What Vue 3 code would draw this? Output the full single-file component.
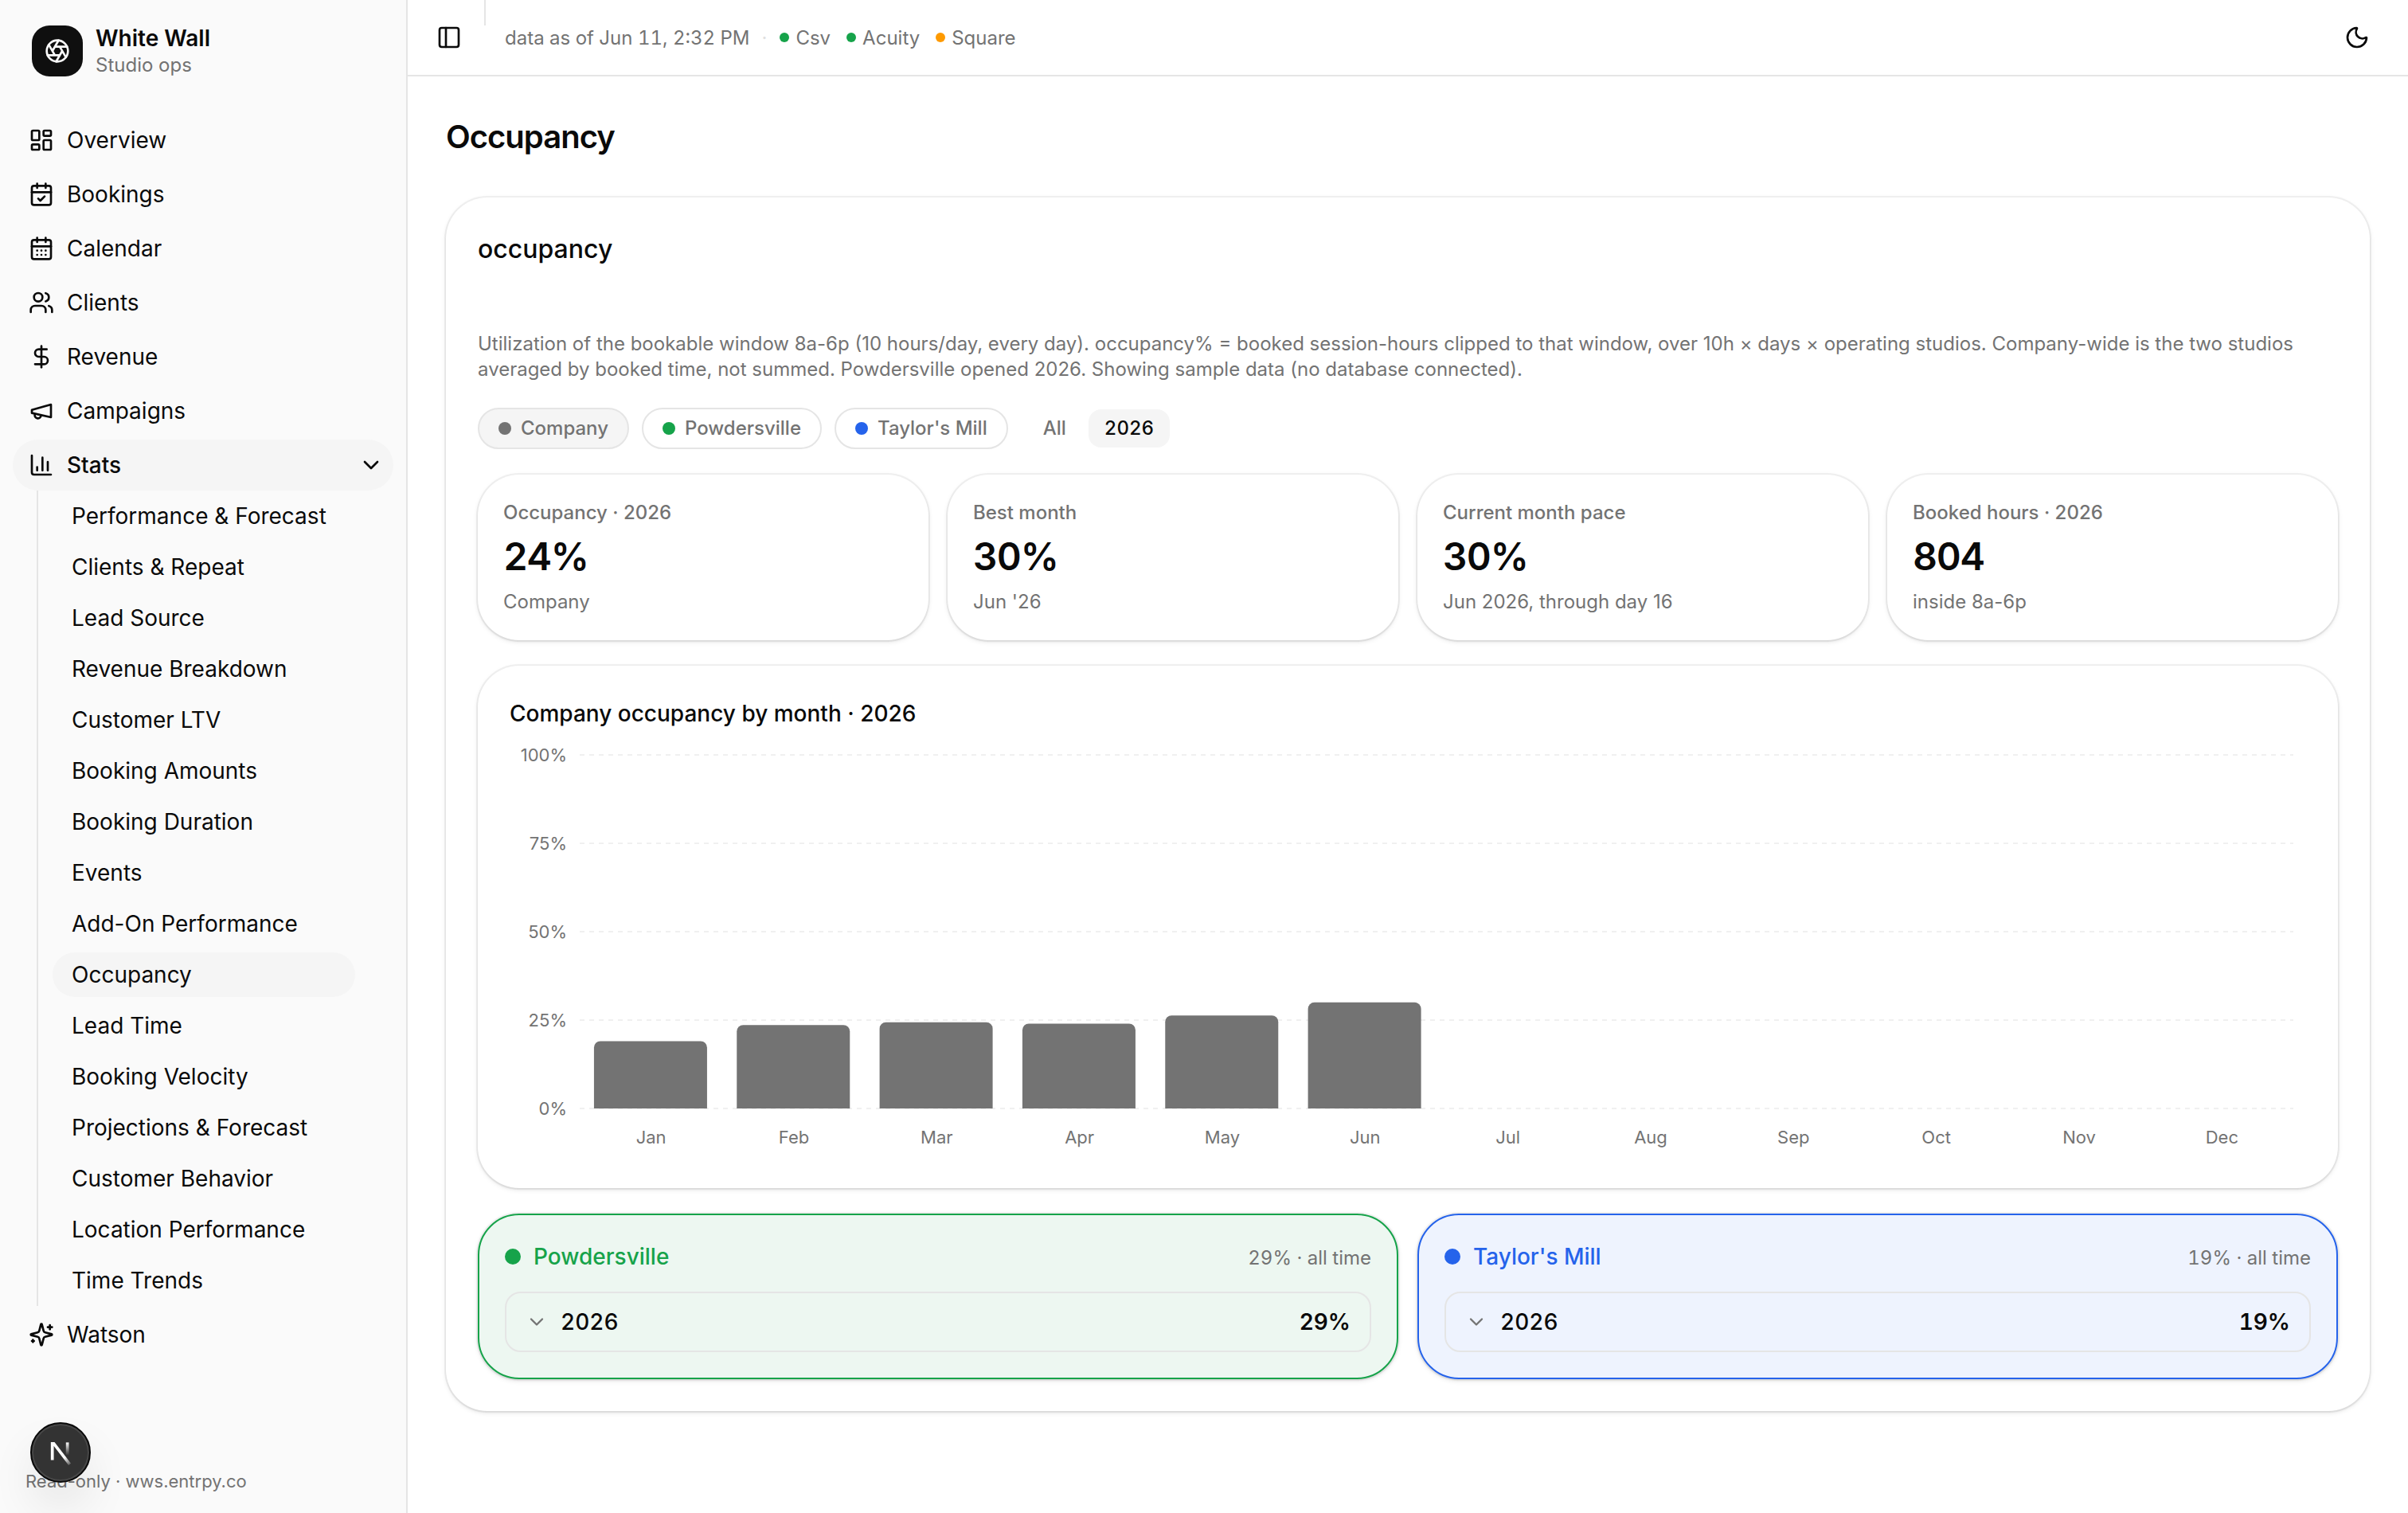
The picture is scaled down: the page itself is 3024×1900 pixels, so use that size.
<template>
  <div class="app">
    <aside class="sidebar">
      <div class="brand">
        <div class="brand-logo">
          <svg class="icon" viewBox="0 0 24 24">
            <circle cx="12" cy="12" r="10" />
            <path d="m14.31 8 5.74 9.94M9.69 8h11.48M7.38 12l5.74-9.94M9.69 16 3.95 6.06M14.31 16H2.83M16.62 12l-5.74 9.94" />
          </svg>
        </div>
        <div class="brand-text">
          <span class="brand-name">White Wall</span>
          <span class="brand-sub">Studio ops</span>
        </div>
      </div>

      <nav class="nav">
        <template v-for="item in navItems" :key="item.label">
          <a class="nav-item" :class="{ open: item.children }">
            <svg class="icon" viewBox="0 0 24 24"><path v-for="d in item.icon" :key="d" :d="d" /></svg>
            <span>{{ item.label }}</span>
            <svg v-if="item.children" class="icon chevron" viewBox="0 0 24 24"><path d="m6 9 6 6 6-6" /></svg>
          </a>
          <div v-if="item.children" class="subnav">
            <a
              v-for="child in item.children"
              :key="child"
              class="subnav-item"
              :class="{ active: child === activePage }"
            >{{ child }}</a>
          </div>
        </template>
      </nav>

      <div class="sidebar-footer">Read-only · wws.entrpy.co</div>
    </aside>

    <div class="main">
      <header class="topbar">
        <svg class="icon" viewBox="0 0 24 24"><rect x="3" y="3" width="18" height="18" rx="2" /><path d="M9 3v18" /></svg>
        <span class="divider"></span>
        <div class="sync">
          <span>data as of Jun 11, 2:32 PM</span>
          <span class="sep">·</span>
          <span v-for="s in sources" :key="s.name" class="source">
            <i class="dot" :class="s.tone"></i>{{ s.name }}
          </span>
        </div>
        <svg class="icon theme" viewBox="0 0 24 24"><path d="M20.985 12.486a9 9 0 1 1-9.473-9.472c.405-.022.617.46.402.803a6 6 0 0 0 8.268 8.268c.344-.215.825-.004.803.401" /></svg>
      </header>

      <main class="content">
        <h1>Occupancy</h1>

        <section class="card panel">
          <h2>occupancy</h2>
          <p class="desc">Utilization of the bookable window 8a-6p (10 hours/day, every day). occupancy% = booked session-hours clipped to that window, over 10h × days × operating studios. Company-wide is the two studios averaged by booked time, not summed. Powdersville opened 2026. Showing sample data (no database connected).</p>

          <div class="filters">
            <button
              v-for="s in scopes"
              :key="s.name"
              class="chip"
              :class="{ selected: s.name === scope }"
              @click="scope = s.name"
            ><i class="dot" :class="s.tone"></i><span>{{ s.name }}</span></button>
            <div class="years">
              <button
                v-for="y in years"
                :key="y"
                class="year"
                :class="{ selected: y === year }"
                @click="year = y"
              >{{ y }}</button>
            </div>
          </div>

          <div class="kpis">
            <div v-for="k in kpis" :key="k.label" class="card kpi">
              <span class="kpi-label">{{ k.label }}</span>
              <span class="kpi-value">{{ k.value }}</span>
              <span class="kpi-sub">{{ k.sub }}</span>
            </div>
          </div>

          <div class="card chart-card">
            <h3>Company occupancy by month · 2026</h3>
            <svg class="chart" viewBox="0 0 2256 520">
              <g v-for="t in ticks" :key="t">
                <line class="grid" :x1="plot.left" :x2="plot.left + plot.width" :y1="yFor(t)" :y2="yFor(t)" />
                <text class="tick" :x="plot.left - 16" :y="yFor(t) + 8" text-anchor="end">{{ t }}%</text>
              </g>
              <g v-for="(m, i) in months" :key="m.name">
                <path v-if="m.value" class="bar" :d="barPath(i, m.value)" />
                <text class="tick" :x="plot.left + (i + 0.5) * band" y="504" text-anchor="middle">{{ m.name }}</text>
              </g>
            </svg>
          </div>

          <div class="locations">
            <div v-for="l in locations" :key="l.name" class="card location" :class="l.tone">
              <div class="location-head">
                <i class="dot" :class="l.tone"></i>
                <span class="location-name">{{ l.name }}</span>
                <span class="location-total">{{ l.rate }} · all time</span>
              </div>
              <div class="location-year">
                <svg class="icon" viewBox="0 0 24 24"><path d="m6 9 6 6 6-6" /></svg>
                <span>2026</span>
                <strong>{{ l.rate }}</strong>
              </div>
            </div>
          </div>
        </section>
      </main>
    </div>

    <div class="dev-badge">
      <svg viewBox="0 1.3 17 15.7">
        <defs>
          <linearGradient id="n-diag" x1="9.95" y1="11.12" x2="14.2" y2="16.6" gradientUnits="userSpaceOnUse">
            <stop stop-color="#fff" />
            <stop offset="1" stop-color="#fff" stop-opacity="0" />
          </linearGradient>
          <linearGradient id="n-stem" x1="11.82" y1="1.4" x2="11.79" y2="9.6" gradientUnits="userSpaceOnUse">
            <stop stop-color="#fff" />
            <stop offset="1" stop-color="#fff" stop-opacity="0" />
          </linearGradient>
        </defs>
        <path d="M13.3 15.2 2.34 1v11.6" fill="none" stroke="url(#n-diag)" stroke-width="1.86" />
        <path d="M11.825 1.5v11.6" fill="none" stroke="url(#n-stem)" stroke-width="1.86" />
      </svg>
    </div>
  </div>
</template>

<script setup>
import { ref } from 'vue'

const activePage = 'Occupancy'
const scope = ref('Company')
const year = ref('2026')

const calendar = ['M8 2v4', 'M16 2v4', 'M5 4h14a2 2 0 0 1 2 2v14a2 2 0 0 1-2 2H5a2 2 0 0 1-2-2V6a2 2 0 0 1 2-2z', 'M3 10h18']

const navItems = [
  {
    label: 'Overview',
    icon: [
      'M4 3h5a1 1 0 0 1 1 1v7a1 1 0 0 1-1 1H4a1 1 0 0 1-1-1V4a1 1 0 0 1 1-1z',
      'M15 3h5a1 1 0 0 1 1 1v3a1 1 0 0 1-1 1h-5a1 1 0 0 1-1-1V4a1 1 0 0 1 1-1z',
      'M15 12h5a1 1 0 0 1 1 1v7a1 1 0 0 1-1 1h-5a1 1 0 0 1-1-1v-7a1 1 0 0 1 1-1z',
      'M4 16h5a1 1 0 0 1 1 1v3a1 1 0 0 1-1 1H4a1 1 0 0 1-1-1v-3a1 1 0 0 1 1-1z',
    ],
  },
  { label: 'Bookings', icon: [...calendar, 'm9 16 2 2 4-4'] },
  { label: 'Calendar', icon: [...calendar, 'M8 14h.01', 'M12 14h.01', 'M16 14h.01', 'M8 18h.01', 'M12 18h.01', 'M16 18h.01'] },
  {
    label: 'Clients',
    icon: [
      'M16 21v-2a4 4 0 0 0-4-4H6a4 4 0 0 0-4 4v2',
      'M16 3.128a4 4 0 0 1 0 7.744',
      'M22 21v-2a4 4 0 0 0-3-3.87',
      'M13 7a4 4 0 1 1-8 0 4 4 0 0 1 8 0z',
    ],
  },
  { label: 'Revenue', icon: ['M12 2v20', 'M17 5H9.5a3.5 3.5 0 0 0 0 7h5a3.5 3.5 0 0 1 0 7H6'] },
  { label: 'Campaigns', icon: ['m3 11 18-5v12L3 14v-3z', 'M11.6 16.8a3 3 0 1 1-5.8-1.6'] },
  {
    label: 'Stats',
    icon: ['M3 3v16a2 2 0 0 0 2 2h16', 'M18 17V9', 'M13 17V5', 'M8 17v-3'],
    children: [
      'Performance & Forecast',
      'Clients & Repeat',
      'Lead Source',
      'Revenue Breakdown',
      'Customer LTV',
      'Booking Amounts',
      'Booking Duration',
      'Events',
      'Add-On Performance',
      'Occupancy',
      'Lead Time',
      'Booking Velocity',
      'Projections & Forecast',
      'Customer Behavior',
      'Location Performance',
      'Time Trends',
    ],
  },
  {
    label: 'Watson',
    icon: [
      'M9.937 15.5A2 2 0 0 0 8.5 14.063l-6.135-1.582a.5.5 0 0 1 0-.962L8.5 9.936A2 2 0 0 0 9.937 8.5l1.582-6.135a.5.5 0 0 1 .963 0L14.063 8.5A2 2 0 0 0 15.5 9.937l6.135 1.581a.5.5 0 0 1 0 .964L15.5 14.063a2 2 0 0 0-1.437 1.437l-1.582 6.135a.5.5 0 0 1-.963 0z',
      'M20 3v4',
      'M22 5h-4',
      'M4 17v2',
      'M5 18H3',
    ],
  },
]

const sources = [
  { name: 'Csv', tone: 'green' },
  { name: 'Acuity', tone: 'green' },
  { name: 'Square', tone: 'amber' },
]

const scopes = [
  { name: 'Company', tone: 'gray' },
  { name: 'Powdersville', tone: 'green' },
  { name: "Taylor's Mill", tone: 'blue' },
]
const years = ['All', '2026']

const kpis = [
  { label: 'Occupancy · 2026', value: '24%', sub: 'Company' },
  { label: 'Best month', value: '30%', sub: "Jun '26" },
  { label: 'Current month pace', value: '30%', sub: 'Jun 2026, through day 16' },
  { label: 'Booked hours · 2026', value: '804', sub: 'inside 8a-6p' },
]

const locations = [
  { name: 'Powdersville', tone: 'green', rate: '29%' },
  { name: "Taylor's Mill", tone: 'blue', rate: '19%' },
]

const ticks = [100, 75, 50, 25, 0]
const months = [
  { name: 'Jan', value: 19.05 },
  { name: 'Feb', value: 23.6 },
  { name: 'Mar', value: 24.4 },
  { name: 'Apr', value: 24 },
  { name: 'May', value: 26.3 },
  { name: 'Jun', value: 30 },
  { name: 'Jul' },
  { name: 'Aug' },
  { name: 'Sep' },
  { name: 'Oct' },
  { name: 'Nov' },
  { name: 'Dec' },
]

const plot = { left: 88, top: 16, width: 2152, height: 444 }
const band = plot.width / months.length

function yFor(v) {
  return plot.top + plot.height * (1 - v / 100)
}

// bar with rounded top corners only
function barPath(i, v) {
  const x = plot.left + (i + 0.1) * band
  const w = 142
  const r = 8
  const y = yFor(v)
  return `M${x} ${yFor(0)}V${y + r}a${r} ${r} 0 0 1 ${r} ${-r}h${w - 2 * r}a${r} ${r} 0 0 1 ${r} ${r}V${yFor(0)}z`
}
</script>

<style>
body { background: #fff }
</style>

<style scoped>
.app {
  display: flex;
  position: relative;
  width: 3024px;
  height: 1900px;
  overflow: hidden;
  box-sizing: border-box;
  font-family: Inter, "Liberation Sans", sans-serif;
  font-size: 28px;
  color: #0a0a0a;
  background: #fff;
}
.app *, .app *::before { box-sizing: border-box }
h1, h2, h3, p { margin: 0 }
button { font: inherit; color: inherit; background: none; border: 0; padding: 0 }

.icon { width: 32px; height: 32px; flex: none; fill: none; stroke: currentColor; stroke-width: 2; stroke-linecap: round; stroke-linejoin: round }
.dot { width: 16px; height: 16px; flex: none; border-radius: 50% }
.dot.gray { background: #737373 }
.dot.green { background: #16a34a }
.dot.blue { background: #2563eb }
.dot.amber { background: #fe9a00 }

/* sidebar */
.sidebar { width: 512px; flex: none; display: flex; flex-direction: column; background: #fafafa; border-right: 2px solid #e5e5e5 }
.brand { height: 128px; display: flex; align-items: center; gap: 16px; padding: 0 40px }
.brand-logo { width: 64px; height: 64px; display: flex; align-items: center; justify-content: center; border-radius: 22px; background: #0f0f0f; color: #fafafa }
.brand-text { display: flex; flex-direction: column }
.brand-name { font-weight: 600; line-height: 35px }
.brand-sub { font-size: 24px; line-height: 32px; color: #737373 }
.nav { flex: 1; display: flex; flex-direction: column; gap: 4px; padding: 16px 16px 0 }
.nav-item { height: 64px; flex: none; display: flex; align-items: center; gap: 16px; padding: 0 12px 0 20px; border-radius: 32px; line-height: 36px }
.nav-item.open { background: #f5f5f5; font-weight: 500 }
.chevron { margin-left: auto }
.subnav { display: flex; flex-direction: column; gap: 8px; margin: -4px 48px 0 30px; padding: 4px 0 4px 18px; border-left: 2px solid #e5e5e5 }
.subnav-item { height: 56px; display: flex; align-items: center; padding: 0 24px; border-radius: 28px; line-height: 36px; white-space: nowrap }
.subnav-item.active { background: #f5f5f5 }
.sidebar-footer { padding: 0 32px 25px; font-size: 22px; line-height: 30px; color: #737373 }

/* top bar */
.main { flex: 1; min-width: 0 }
.topbar { height: 96px; display: flex; align-items: center; padding: 0 48px 0 36px; border-bottom: 2px solid #e5e5e5 }
.divider { align-self: flex-start; width: 2px; height: 32px; margin: 0 24px 0 28px; background: #e5e5e5 }
.sync { display: flex; align-items: center; font-size: 24px; color: #737373; font-variant-numeric: tabular-nums }
.sep { margin: 0 16px 0 15px; color: #e0e0e0 }
.source { display: flex; align-items: center; gap: 8px; margin-right: 20px }
.source .dot { width: 12px; height: 12px }
.theme { margin-left: auto }

/* content */
.content { padding: 48px }
h1 { font-size: 40px; line-height: 56px; font-weight: 600; letter-spacing: -0.025em }
.card { border-radius: 52px; background: #fff; box-shadow: 0 0 0 2px rgba(10,10,10,0.05), 0 2px 6px rgba(0,0,0,0.1), 0 2px 4px -2px rgba(0,0,0,0.1) }
.panel { display: flex; flex-direction: column; gap: 32px; margin-top: 48px; padding: 40px }
h2 { font-size: 32px; line-height: 48px; font-weight: 500; padding-top: 1px; margin-bottom: 47px }
.desc { font-size: 24px; line-height: 32px; color: #737373 }

.filters { display: flex; align-items: center; gap: 16px; font-size: 24px; font-weight: 500; color: #737373 }
.chip { height: 52px; display: flex; align-items: center; gap: 12px; padding: 0 24px; border: 2px solid #e5e5e5; border-radius: 26px }
.chip span { padding-bottom: 1px }
.chip.selected { background: #f5f5f5 }
.years { display: flex; gap: 8px; margin-left: 8px; font-variant-numeric: tabular-nums }
.year { height: 48px; padding: 0 20px 1px; border-radius: 16px }
.year.selected { background: #f5f5f5; color: #0a0a0a }

.kpis { display: grid; grid-template-columns: repeat(4, 1fr); gap: 24px }
.kpi { height: 208px; display: flex; flex-direction: column; justify-content: space-between; padding: 32px; font-size: 24px; line-height: 32px; color: #737373 }
.kpi-label { font-weight: 500 }
.kpi-value { margin-bottom: 3px; font-size: 48px; line-height: 64px; font-weight: 600; color: #0a0a0a; letter-spacing: -0.025em; font-variant-numeric: tabular-nums }

.chart-card { height: 656px; padding: 40px }
h3 { font-size: 28px; line-height: 40px; font-weight: 500; margin-bottom: 16px }
.chart { display: block; width: 2256px; height: 520px }
.grid { stroke: #f0f0f0; stroke-width: 2; stroke-dasharray: 6 6 }
.tick { font-size: 22px; fill: #737373 }
.bar { fill: #737373 }

.locations { display: grid; grid-template-columns: 1fr 1fr; gap: 24px }
.location { display: flex; flex-direction: column; gap: 24px; padding: 32px; border: 2px solid }
.location.green { border-color: #16a34a; background: #edf7f1 }
.location.blue { border-color: #2563eb; background: #eef3fe }
.location-head { height: 40px; display: flex; align-items: center; gap: 16px }
.location-head .dot { width: 20px; height: 20px }
.location-name { font-weight: 500 }
.green .location-name { color: #16a34a }
.blue .location-name { color: #2563eb }
.location-total { margin-left: auto; padding-top: 2px; font-size: 24px; color: #737373; font-variant-numeric: tabular-nums }
.location-year { height: 76px; display: flex; align-items: center; gap: 16px; padding: 0 24px; border: 2px solid #e5e5e5; border-radius: 20px; font-weight: 500; font-variant-numeric: tabular-nums }
.location-year .icon { width: 28px; height: 28px; color: #737373 }
.location-year strong { margin-left: auto; font-weight: 600 }

/* floating dev tools button */
.dev-badge { position: absolute; left: 38px; bottom: 38px; width: 76px; height: 76px; border-radius: 50%; background: #333; border: 2px solid #0a0a0a; box-shadow: inset 0 0 0 2px #484848, 0 32px 64px -16px rgba(0,0,0,0.24) }
.dev-badge svg { display: block; width: 34px; height: 31.4px; margin: 22.6px 0 0 20.5px }
</style>
